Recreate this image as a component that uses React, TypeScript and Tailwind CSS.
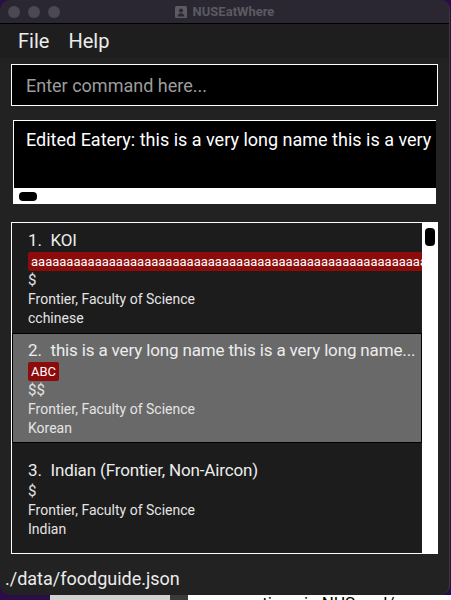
import React from "react";

interface Eatery {
  index: number;
  name: string;
  tags: string[];
  price: string;
  location: string;
  category: string;
  selected?: boolean;
}

const eateries: Eatery[] = [
  {
    index: 1,
    name: "KOI",
    tags: ["a".repeat(120)],
    price: "$",
    location: "Frontier, Faculty of Science",
    category: "cchinese",
  },
  {
    index: 2,
    name: "this is a very long name this is a very long name...",
    tags: ["ABC"],
    price: "$$",
    location: "Frontier, Faculty of Science",
    category: "Korean",
    selected: true,
  },
  {
    index: 3,
    name: "Indian (Frontier, Non-Aircon)",
    tags: [],
    price: "$",
    location: "Frontier, Faculty of Science",
    category: "Indian",
  },
];

const EateryCard: React.FC<{ eatery: Eatery }> = ({ eatery }) => {
  return (
    <div
      className={
        eatery.selected
          ? "h-[110px] shrink-0 flex flex-col justify-center bg-[#696969] border border-black pl-[15px] pr-[4px]"
          : "h-[110px] shrink-0 flex flex-col justify-center pl-[16px]"
      }
    >
      <div className="flex text-[17px] leading-[24px] text-[#ececec] whitespace-nowrap overflow-hidden">
        <span className="shrink-0">{eatery.index}.&nbsp;&nbsp;</span>
        <span className="tracking-[-0.15px] overflow-hidden">{eatery.name}</span>
      </div>
      {eatery.tags.map((tag) => (
        <div
          key={tag}
          className="w-fit bg-[#8c0b0b] rounded-[2px] px-[3px] h-[19px] text-[13px] leading-[19px] text-white whitespace-nowrap"
        >
          {tag}
        </div>
      ))}
      <div className="text-[15px] leading-[19px] text-[#e4e4e4]">{eatery.price}</div>
      <div className="text-[14px] leading-[19px] text-[#e4e4e4]">{eatery.location}</div>
      <div className="text-[14px] leading-[19px] text-[#e4e4e4]">{eatery.category}</div>
    </div>
  );
};

export default function App() {
  return (
    <div
      className="w-[451px] h-[600px] flex flex-col bg-[#2b0e48] overflow-hidden"
      style={{ fontFamily: "Roboto, Inter, sans-serif" }}
    >
      {/* window */}
      <div className="w-[450px] h-[595px] shrink-0 flex flex-col rounded-[10px] overflow-hidden bg-[#222222] border-r border-[#3a3a3a]">
        {/* title bar */}
        <div className="h-[24px] shrink-0 grid grid-cols-[1fr_auto_1fr] items-center bg-[#2a2732] border-b border-black">
          <div className="flex items-center gap-[8px] pl-[8px]">
            <span className="w-[12px] h-[12px] rounded-full bg-[#4b4953]" />
            <span className="w-[12px] h-[12px] rounded-full bg-[#4b4953]" />
            <span className="w-[12px] h-[12px] rounded-full bg-[#4b4953]" />
          </div>
          <div className="flex items-center gap-[6px] text-[13px] font-bold text-[#5c5a62]">
            <svg width="12" height="12" viewBox="0 0 12 12">
              <rect x="0" y="0" width="12" height="12" rx="1.5" fill="#5c5a62" />
              <circle cx="6" cy="4.5" r="2" fill="#2a2732" />
              <path d="M2.5 10.5c0-2 1.6-3.3 3.5-3.3s3.5 1.3 3.5 3.3z" fill="#2a2732" />
            </svg>
            <span>NUSEatWhere</span>
          </div>
          <div />
        </div>

        {/* menu bar */}
        <div className="h-[34px] shrink-0 flex items-center gap-[19px] pl-[18px] text-[20px] text-[#ececec] bg-[#1e1e1e]">
          <span>File</span>
          <span>Help</span>
        </div>

        {/* command box */}
        <div className="mt-[6px] mx-[11px] h-[42px] shrink-0 border border-white bg-black flex items-center px-[14px]">
          <span className="text-[18px] text-[#9d9d9d]">Enter command here...</span>
        </div>

        {/* result display */}
        <div className="mt-[14px] ml-[13px] mr-[13px] h-[84px] shrink-0 border-t border-l border-white bg-black flex flex-col overflow-hidden">
          <div className="flex-1 pl-[12px] pt-[6px] text-[18px] leading-[26px] text-white whitespace-nowrap overflow-hidden">
            Edited Eatery: this is a very long name this is a very long name this is a very long name
          </div>
          <div className="h-[16px] shrink-0 bg-white flex items-center pl-[5px]">
            <span className="w-[18px] h-[9px] rounded-[4px] bg-black" />
          </div>
        </div>

        {/* eatery list */}
        <div className="mt-[18px] mx-[11px] h-[332px] shrink-0 border border-white bg-[#1c1c1c] flex overflow-hidden">
          <div className="flex-1 min-w-0 flex flex-col overflow-hidden">
            {eateries.map((e) => (
              <EateryCard key={e.index} eatery={e} />
            ))}
            <div className="h-[4px] shrink-0 bg-black" />
          </div>
          <div className="w-[15px] shrink-0 bg-white pt-[5px] flex justify-center">
            <span className="w-[10px] h-[18px] rounded-[4px] bg-black" />
          </div>
        </div>

        {/* status bar */}
        <div className="flex-1 flex items-end pb-[3px] pl-[5px] text-[18px] text-[#ececec]">
          ./data/foodguide.json
        </div>
      </div>

      {/* desktop behind the window */}
      <div className="flex-1 flex">
        <div className="w-[50px] bg-[#2b0e48]" />
        <div className="w-[120px] bg-[#d2d2d2]" />
        <div className="w-[18px] bg-[#3a3a3a]" />
        <div className="flex-1 bg-white overflow-hidden">
          <div className="pl-[55px] -mt-[1px] text-[17px] leading-[18px] text-black whitespace-nowrap">
            options in NUS and/or cannot
          </div>
        </div>
      </div>
    </div>
  );
}
